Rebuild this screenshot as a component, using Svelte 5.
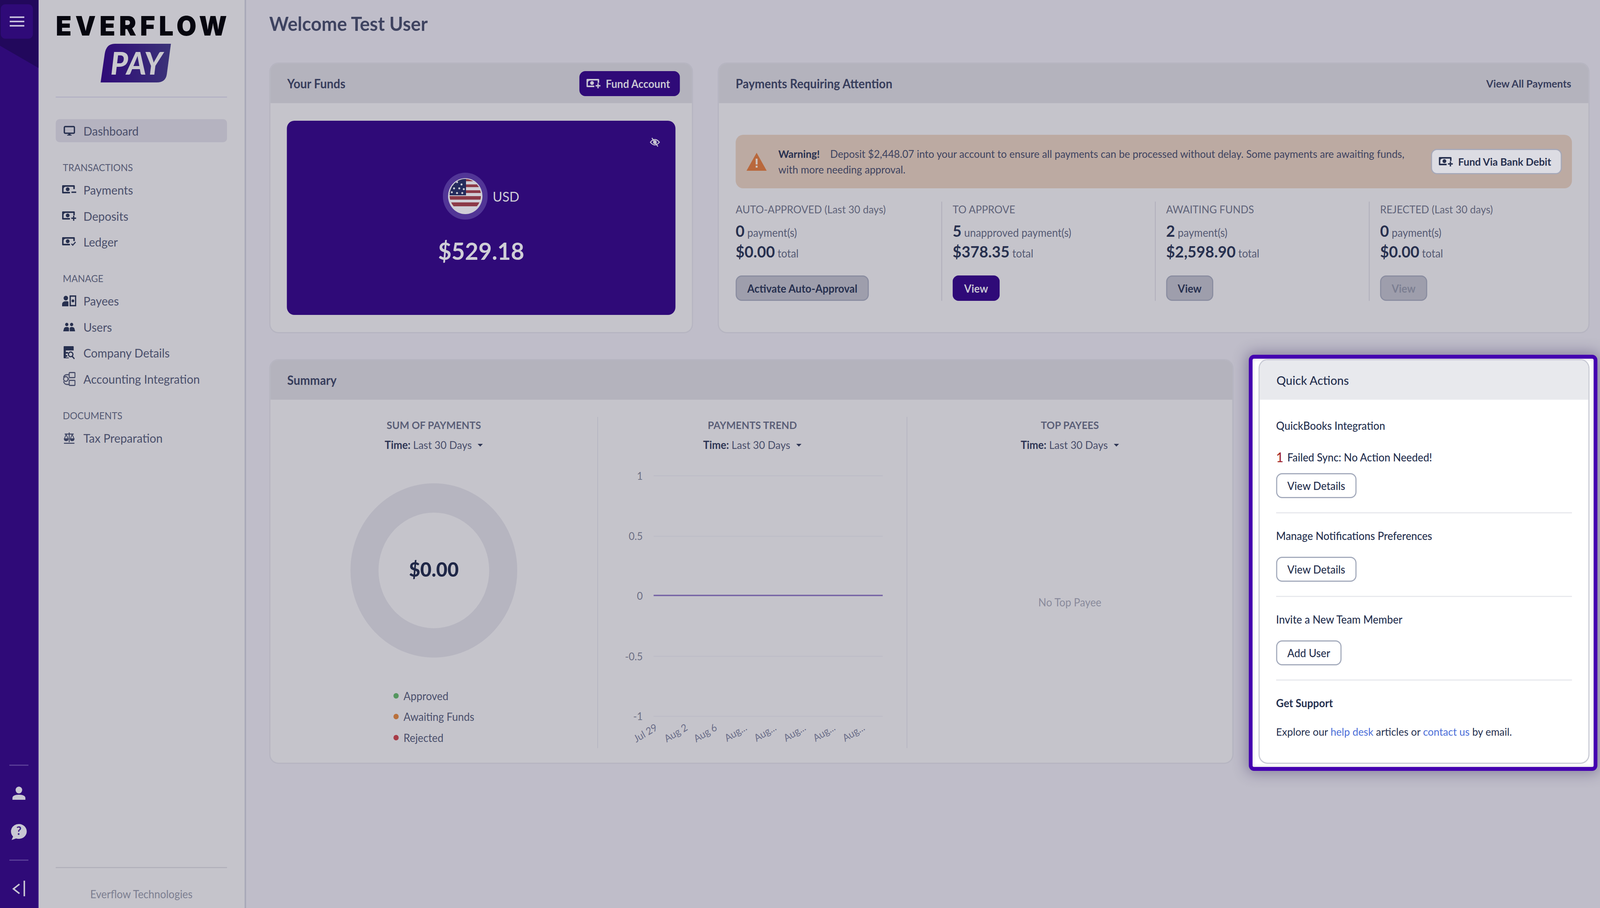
<script>
  // Design canvas is 4278 wide; fit it to the width the browser actually grants.
  const fit = Math.min(1, window.innerWidth / 4278);

  const sections = [
    { label: 'TRANSACTIONS', items: [['money-minus', 'Payments'], ['money-plus', 'Deposits'], ['money-check', 'Ledger']] },
    { label: 'MANAGE', items: [['payees', 'Payees'], ['users', 'Users'], ['company', 'Company Details'], ['accounting', 'Accounting Integration']] },
    { label: 'DOCUMENTS', items: [['tax', 'Tax Preparation']] }
  ];
  const stats = [
    { label: 'AUTO-APPROVED', note: ' (Last 30 days)', n: '0', unit: 'payment(s)', amt: '$0.00', btn: 'Activate Auto-Approval', kind: 'sec' },
    { label: 'TO APPROVE', note: '', n: '5', unit: 'unapproved payment(s)', amt: '$378.35', btn: 'View', kind: 'pri' },
    { label: 'AWAITING FUNDS', note: '', n: '2', unit: 'payment(s)', amt: '$2,598.90', btn: 'View', kind: 'sec' },
    { label: 'REJECTED', note: ' (Last 30 days)', n: '0', unit: 'payment(s)', amt: '$0.00', btn: 'View', kind: 'dis' }
  ];
  const legend = [['#55965f', 'Approved'], ['#b9703c', 'Awaiting Funds'], ['#a83c48', 'Rejected']];
  const yTicks = [['1', 1217], ['0.5', 1372], ['-0.5', 1680], ['-1', 1834]];
  const xTicks = [['Jul 29', 1760], ['Aug 2', 1841], ['Aug 6', 1920], ['Aug...', 2000], ['Aug...', 2079], ['Aug...', 2158], ['Aug...', 2237], ['Aug...', 2316]];
</script>

{#snippet money(kind)}
  <svg class="ic-money" viewBox="0 0 38 24" aria-hidden="true">
    <path fill="currentColor" d="M2 0H32a2 2 0 0 1 2 2V10H30V4H9.5a5.5 5.5 0 0 0-5.5 5.5V17H21V21H2a2 2 0 0 1-2-2V2a2 2 0 0 1 2-2Z"/>
    <circle cx="15" cy="10.5" r="5" fill="currentColor"/>
    {#if kind === 'minus'}
      <path d="M25 18H38" stroke="currentColor" stroke-width="3.4" fill="none"/>
    {:else if kind === 'plus'}
      <path d="M31 11V24M24.5 17.5H37.5" stroke="currentColor" stroke-width="3.4" fill="none"/>
    {:else}
      <path d="M25 17l3.5 3.5L36 12.5" stroke="currentColor" stroke-width="2.8" fill="none"/>
    {/if}
  </svg>
{/snippet}

{#snippet icon(name)}
  {#if name === 'monitor'}
    <svg class="ic-monitor" viewBox="0 0 31 25" aria-hidden="true"><rect x="2" y="2" width="27" height="17" rx="2.5" fill="none" stroke="currentColor" stroke-width="3.6"/><path fill="currentColor" d="M12.5 20h6v3h3v2h-12v-2h3Z"/></svg>
  {:else if name === 'money-minus'}
    {@render money('minus')}
  {:else if name === 'money-plus'}
    {@render money('plus')}
  {:else if name === 'money-check'}
    {@render money('check')}
  {:else if name === 'payees'}
    <svg class="ic-payees" viewBox="0 0 38 28" aria-hidden="true"><circle cx="10" cy="7" r="6" fill="currentColor"/><path fill="currentColor" d="M0 28v-5c0-5 4-8 10-8s7 1 7 1v12Z"/><path fill="currentColor" fill-rule="evenodd" d="M20 0h18v28H20ZM23.5 3.5v21h11v-21Z"/><circle cx="29" cy="14" r="3.6" fill="currentColor"/></svg>
  {:else if name === 'users'}
    <svg class="ic-users" viewBox="0 0 32 22" aria-hidden="true"><circle cx="9.5" cy="4.5" r="4.3" fill="currentColor"/><circle cx="22.5" cy="4.5" r="4.3" fill="currentColor"/><path fill="currentColor" d="M0 22l2-7c1-3 3-4 7.500-4s6 1.500 6 4v7Z"/><path fill="currentColor" d="M17.500 22v-7c0-2.500 1.500-4 5.500-4s6 1 7 4l2 7Z"/></svg>
  {:else if name === 'company'}
    <svg class="ic-company" viewBox="0 0 30 34" aria-hidden="true"><path fill="currentColor" d="M0 1.500A1.500 1.500 0 0 1 1.500 0H25.500A1.500 1.500 0 0 1 27 1.500V11H6V15H12V19H6V23H10V27H6V29H14V31H1.500A1.500 1.500 0 0 1 0 29.500Z"/><circle cx="19" cy="21" r="6" fill="none" stroke="currentColor" stroke-width="3"/><path d="M23 26l6 6.500" stroke="currentColor" stroke-width="3.200"/></svg>
  {:else if name === 'accounting'}
    <svg class="ic-accounting" viewBox="0 0 34 36" fill="none" stroke="currentColor" stroke-width="2.800" aria-hidden="true"><rect x="17" y="1.500" width="15.500" height="13" rx="2"/><rect x="17" y="21.500" width="15.500" height="13" rx="2"/><path d="M17 7H11Q4 7 2 14M2 24Q4 32 11 32H17"/><circle cx="8" cy="18" r="6"/><path d="M17 18H14"/></svg>
  {:else if name === 'tax'}
    <svg class="ic-tax" viewBox="0 0 30 30" aria-hidden="true" fill="none" stroke="currentColor" stroke-width="2.400"><path d="M15 1V26M3 5H27M1 28.500H29"/><path d="M7 6L2 17H12ZM23 6L18 17H28Z" stroke-width="2"/><path fill="currentColor" stroke="none" d="M1 17.500H13C13 21 11 23 7 23S1 21 1 17.500ZM17 17.500H29C29 21 27 23 23 23S17 21 17 17.500Z"/></svg>
  {/if}
{/snippet}

<div class="viewport">
<div class="page" style:transform="scaleX({fit})">
  <aside class="rail">
    <button class="burger" aria-label="Menu"><span></span><span></span><span></span></button>
    <div class="rail-foot">
      <i class="rail-rule"></i>
      <svg class="ic-person" viewBox="0 0 35 34" aria-hidden="true"><circle cx="17.500" cy="9" r="8.800" fill="currentColor"/><path fill="currentColor" d="M0 34v-4c0-6 7-9 17.500-9S35 24 35 30v4Z"/></svg>
      <svg class="ic-chat" viewBox="0 0 43 41" aria-hidden="true"><path fill="currentColor" d="M21.500 0A21 19 0 0 1 21.500 38Q17 38 14 37L2 41 6 32A21 19 0 0 1 21.500 0Z"/><text x="21.500" y="28" text-anchor="middle" class="chat-q">?</text></svg>
      <i class="rail-rule r2"></i>
      <svg class="ic-collapse" viewBox="0 0 35 40" fill="none" stroke="currentColor" stroke-width="4" aria-hidden="true"><path d="M19 9L3 21 19 33M32 0V40"/></svg>
    </div>
  </aside>

  <nav class="side">
    <div class="wordmark">EVERFLOW</div>
    <svg class="pay" viewBox="0 0 188 99" aria-label="Pay">
      <defs><linearGradient id="payg" x1="0" x2="1" y1="0" y2="0"><stop offset="0" stop-color="#2f0a78"/><stop offset="1" stop-color="#3b3378"/></linearGradient></defs>
      <path fill="url(#payg)" d="M0 99L11 26Q15 0 38 0L188 0 177 78Q174 99 150 99Z"/>
      <text x="96" y="79" text-anchor="middle" class="pay-t">PAY</text>
    </svg>
    <hr class="side-rule" />
    <a class="row active"><span class="ico">{@render icon('monitor')}</span>Dashboard</a>
    {#each sections as s}
      <div class="sec-label">{s.label}</div>
      {#each s.items as it}
        <a class="row"><span class="ico">{@render icon(it[0])}</span>{it[1]}</a>
      {/each}
    {/each}
    <div class="side-foot">Everflow Technologies</div>
  </nav>

  <main class="main">
    <h1>Welcome Test User</h1>
    <div class="top-grid">
      <section class="card">
        <header class="card-h">
          <span>Your Funds</span>
          <button class="btn pri fund">{@render money('plus')}Fund Account</button>
        </header>
        <div class="funds-body">
          <div class="panel">
            <svg class="eye" viewBox="0 0 28 24" fill="none" stroke="currentColor" stroke-width="2.600" aria-hidden="true"><path d="M2 12Q14 -2 26 12Q14 26 2 12Z"/><circle cx="14" cy="12" r="3.600" fill="currentColor"/><path d="M6 1L22 23"/></svg>
            <div class="cur">
              <svg class="flag" viewBox="0 0 120 120" aria-hidden="true">
                <circle cx="60" cy="60" r="60" fill="#513596"/>
                <circle cx="60" cy="60" r="46" fill="#cfced6"/>
                <clipPath id="fc"><circle cx="60" cy="58" r="42"/></clipPath>
                <g clip-path="url(#fc)">
                  <rect x="18" y="16" width="84" height="6" fill="#8c3a48"/>
                  <rect x="18" y="30" width="84" height="7" fill="#8c3a48"/>
                  <rect x="18" y="45" width="84" height="7" fill="#8c3a48"/>
                  <rect x="18" y="60" width="84" height="9" fill="#8c3a48"/>
                  <rect x="18" y="76" width="84" height="10" fill="#8c3a48"/>
                  <rect x="18" y="10" width="44" height="48" fill="#252b5c"/>
                  {#each [[26,30],[38,24],[50,30],[30,40],[44,40],[56,42],[24,50],[38,52],[52,52]] as p}
                    <circle cx={p[0]} cy={p[1]} r="2.600" fill="#cfced6"/>
                  {/each}
                </g>
              </svg>
              <span class="usd">USD</span>
            </div>
            <div class="balance">$529.18</div>
          </div>
        </div>
      </section>

      <section class="card">
        <header class="card-h">
          <span>Payments Requiring Attention</span>
          <a class="all">View All Payments</a>
        </header>
        <div class="pay-body">
          <div class="alert">
            <svg class="warn" viewBox="0 0 54 46" aria-hidden="true"><path fill="#b9683c" d="M27 0L54 46H0Z"/><path fill="#cfc5c0" d="M24.500 15h5v15h-5ZM24.500 33h5v5h-5Z"/></svg>
            <p><b>Warning!</b>&nbsp;&nbsp;&nbsp; Deposit $2,448.07 into your account to ensure all payments can be processed without delay. Some payments are awaiting funds, with more needing approval.</p>
            <button class="btn bank">{@render money('plus')}Fund Via Bank Debit</button>
          </div>
          <div class="stats">
            {#each stats as st}
              <div class="stat">
                <div class="st-label">{st.label}{st.note}</div>
                <div class="st-n"><b>{st.n}</b> {st.unit}</div>
                <div class="st-a"><b>{st.amt}</b> total</div>
                <button class="btn {st.kind}">{st.btn}</button>
              </div>
            {/each}
          </div>
        </div>
      </section>
    </div>

    <div class="bot-grid">
      <section class="card">
        <header class="card-h"><span>Summary</span></header>
        <div class="sum-body">
          <div class="sum-col">
            <div class="sum-title">SUM OF PAYMENTS</div>
            <div class="time"><b>Time:</b> Last 30 Days <i class="caret"></i></div>
            <div class="donut">
              <svg viewBox="0 0 446 446" aria-hidden="true"><circle cx="223" cy="223" r="185.500" fill="none" stroke="#b6b5c0" stroke-width="75"/></svg>
              <strong>$0.00</strong>
            </div>
            <ul class="legend">
              {#each legend as l}
                <li><i style="background:{l[0]}"></i>{l[1]}</li>
              {/each}
            </ul>
          </div>
          <div class="sum-col">
            <div class="sum-title">PAYMENTS TREND</div>
            <div class="time"><b>Time:</b> Last 30 Days <i class="caret"></i></div>
            <svg class="trend" viewBox="1599 1160 827 748" aria-label="Payments trend chart">
              {#each yTicks as t}
                <line x1="1748" x2="2362" y1={t[1]} y2={t[1]} stroke="#bcbbc6" stroke-width="2"/>
                <text x="1719" y={t[1] + 10} text-anchor="end" class="yt">{t[0]}</text>
              {/each}
              <text x="1719" y="1535" text-anchor="end" class="yt">0</text>
              <line x1="1748" x2="2362" y1="1524" y2="1524" stroke="#7462a4" stroke-width="3.500"/>
              {#each xTicks as t}
                <text transform="translate({t[1]} 1868) rotate(-30)" text-anchor="end" class="xt">{t[0]}</text>
              {/each}
            </svg>
          </div>
          <div class="sum-col">
            <div class="sum-title">TOP PAYEES</div>
            <div class="time"><b>Time:</b> Last 30 Days <i class="caret"></i></div>
            <div class="none">No Top Payee</div>
          </div>
        </div>
      </section>

      <div class="qa-wrap">
        <div class="spot"></div>
        <section class="card qa">
          <header class="card-h"><span>Quick Actions</span></header>
          <div class="qa-body">
            <div class="qa-t first">QuickBooks Integration</div>
            <div class="qa-fail"><em>1</em>Failed Sync: No Action Needed!</div>
            <button class="btn out b1">View Details</button>
            <hr />
            <div class="qa-t">Manage Notifications Preferences</div>
            <button class="btn out">View Details</button>
            <hr />
            <div class="qa-t">Invite a New Team Member</div>
            <button class="btn out">Add User</button>
            <hr />
            <div class="qa-t strong">Get Support</div>
            <p>Explore our <a>help desk</a> articles or <a>contact us</a> by email.</p>
          </div>
        </section>
      </div>
    </div>
  </main>
</div>
</div>

<style>
  :global(body) { margin: 0; background: #bfbdc9; overflow: hidden; }
  .viewport { width: 100vw; height: 100vh; overflow: hidden; }
  .page { display: flex; width: 4278px; height: 2324px; transform-origin: 0 0; font-family: Lato, "Noto Sans", sans-serif; color: #27304f; background: #bfbdc9; }

  .rail { position: relative; flex: 0 0 103px; box-sizing: border-box; display: flex; flex-direction: column; background: #2f0a78; color: #c9c7d3; border-right: 2px solid #43228a; }
  .rail::before { content: ""; position: absolute; left: 0; top: 0; width: 103px; height: 174px; background: #22085c; clip-path: polygon(0 0, 100% 0, 100% 100%, 0 117px); }
  .burger { position: relative; width: 86px; height: 88px; margin: 11px 0 0 2px; padding: 0; border: 0; border-radius: 12px; background: #2f0a78; display: flex; flex-direction: column; align-items: center; justify-content: center; gap: 7px; }
  .burger span { display: block; width: 39px; height: 4px; background: #c6bfdc; }
  .rail-foot { margin-top: auto; padding-bottom: 30px; display: flex; flex-direction: column; align-items: center; }
  .rail-rule { display: block; width: 51px; height: 3px; background: #5a3e98; }
  .rail-rule.r2 { margin-top: 50px; }
  .ic-person { width: 35px; height: 34px; margin-top: 53px; }
  .ic-chat { width: 43px; height: 41px; margin-top: 62px; overflow: visible; }
  .chat-q { font: 700 30px Lato, sans-serif; fill: #3d1c86; }
  .ic-collapse { width: 35px; height: 40px; margin-top: 51px; }

  .side { flex: 0 0 555px; min-width: 0; box-sizing: border-box; display: flex; flex-direction: column; padding: 0 47px 0 46px; background: #c5c4cb; border-right: 4px solid #a9a9b8; }
  .wordmark { margin-top: 41px; height: 50px; font: 900 69px/50px Inter, sans-serif; letter-spacing: 10px; color: #06060f; white-space: nowrap; width: 100%; }
  .pay { display: block; width: 188px; height: 99px; margin: 21px 0 0 120px; overflow: visible; }
  .pay-t { font: italic 900 80px Lato, sans-serif; fill: #c9c8ce; }
  .side-rule { width: 100%; height: 3px; border: 0; margin: 36px 0 55px; background: #b4b2c4; }
  .row { display: flex; align-items: center; height: 66.400px; padding-left: 17px; font-size: 31px; color: #4a4f6b; }
  .row.active { height: 59px; background: #b5b3c0; border-radius: 10px; margin-bottom: 4px; }
  .ico { flex: 0 0 38px; display: flex; justify-content: center; align-items: center; margin-right: 19px; color: #27304f; }
  .ico svg { display: block; }
  .sec-label { margin: 42px 0 7px 19px; height: 36px; line-height: 36px; font-size: 25px; color: #555a74; }
  .ic-money { width: 38px; height: 24px; display: block; }
  .ic-monitor { width: 31px; height: 25px; }
  .ic-payees { width: 38px; height: 28px; }
  .ic-users { width: 32px; height: 22px; }
  .ic-company { width: 30px; height: 34px; }
  .ic-accounting { width: 34px; height: 36px; color: #4a4f6b; }
  .ic-tax { width: 30px; height: 30px; color: #3a4160; }
  .side-foot { margin-top: auto; border-top: 3px solid #b2b1bc; padding-top: 30px; height: 72px; line-height: 72px; text-align: center; font-size: 28px; color: #7c7e90; }

  .main { flex: 1; min-width: 0; padding: 0 28px 0 62px; }
  h1 { margin: 0 0 40px; height: 120px; line-height: 120px; font-size: 49.600px; font-weight: 700; color: #3e4360; }
  .top-grid { display: grid; grid-template-columns: 1133px 1fr; gap: 66px; height: 693px; }
  .bot-grid { display: grid; grid-template-columns: 2578px 1fr; gap: 67px; height: 1036px; margin-top: 66px; }
  .card { box-sizing: border-box; display: flex; flex-direction: column; border: 3px solid #b6b5c1; border-radius: 24px; background: #c5c4cb; overflow: hidden; }
  .card-h { flex: 0 0 101px; box-sizing: border-box; display: flex; align-items: center; justify-content: space-between; padding: 0 46px 0 45px; background: #b4b3bd; font-size: 31.500px; font-weight: 700; color: #373d5c; }
  .all { font-size: 27.500px; color: #373d5c; }

  .btn { display: inline-flex; align-items: center; justify-content: center; box-sizing: border-box; height: 65px; padding: 0 28px; border: 3px solid transparent; border-radius: 16px; font: 700 28px Lato, sans-serif; white-space: nowrap; }
  .btn.pri { background: #2f0a78; color: #c9c7d3; }
  .btn.sec { background: #9e9eac; border-color: #8a8da0; color: #27304f; }
  .btn.dis { background: #9e9eac; border-color: #8a8da0; color: #7c7f92; }
  .btn.fund { height: 64px; width: 269px; padding: 0 8px 0 0; margin-right: -14px; }
  .fund .ic-money, .bank .ic-money { margin-right: 14px; }

  .funds-body { flex: 1; display: flex; padding: 45px 44px 44px; }
  .panel { position: relative; flex: 1; display: flex; flex-direction: column; align-items: center; padding-top: 133px; background: #2f0a78; border-radius: 20px; color: #cfced6; }
  .eye { position: absolute; top: 43px; right: 41px; width: 28px; height: 24px; color: #c9c7d3; }
  .cur { display: flex; align-items: center; gap: 13px; }
  .flag { width: 120px; height: 120px; display: block; }
  .usd { font-size: 35px; }
  .balance { margin-top: 39px; height: 80px; line-height: 80px; font-size: 62px; font-weight: 700; }

  .pay-body { flex: 1; padding: 81px 44px 0 45px; }
  .alert { box-sizing: border-box; display: flex; align-items: center; height: 137px; padding: 0 27px 0 29px; background: #bcaaa2; border-radius: 20px; }
  .warn { flex: 0 0 54px; width: 54px; height: 46px; margin-right: 31px; }
  .alert p { flex: 1; margin: 0; max-width: 1700px; font-size: 27.300px; line-height: 40px; color: #3e4360; }
  .alert b { color: #27304f; }
  .bank { margin-left: auto; flex: 0 0 350px; height: 65px; padding: 0 8px 0 0; background: #dcdce3; border-color: #a6a8b8; color: #27304f; font-size: 27.300px; }
  .stats { display: grid; grid-template-columns: 550px 571px 572px 1fr; height: 254px; margin-top: 34px; }
  .stat { box-sizing: border-box; display: flex; flex-direction: column; align-items: flex-start; padding-left: 28px; border-left: 2px solid #aeadb9; }
  .stat:first-child { padding-left: 0; border-left: 0; }
  .st-label { height: 40px; line-height: 40px; font-size: 27.400px; color: #5f6379; }
  .st-n { margin-top: 10px; height: 50px; line-height: 50px; font-size: 28px; color: #555a74; }
  .st-a { margin-top: 3px; height: 50px; line-height: 50px; font-size: 28px; color: #555a74; }
  .st-n b, .st-a b { font-size: 41px; font-weight: 700; color: #27304f; }
  .stat .btn { margin-top: auto; }

  .sum-body { flex: 1; display: grid; grid-template-columns: 874px 827px 1fr; padding: 44px 0; }
  .sum-col { display: flex; flex-direction: column; align-items: center; min-width: 0; }
  .sum-col + .sum-col { border-left: 2px solid #b7b6c2; }
  .sum-title { height: 42px; line-height: 42px; font-size: 27px; font-weight: 700; color: #5b5f78; }
  .time { margin-top: 9px; height: 42px; line-height: 42px; font-size: 27.800px; color: #4a4f6b; display: flex; align-items: center; gap: 7px; }
  .time b { color: #2e3554; }
  .caret { width: 0; height: 0; margin-left: 9px; border: 7px solid transparent; border-top-color: #2e3554; border-bottom: 0; }
  .donut { position: relative; width: 446px; height: 446px; margin-top: 77px; display: flex; align-items: center; justify-content: center; }
  .donut svg { position: absolute; inset: 0; width: 100%; height: 100%; }
  .donut strong { position: relative; top: -4px; font-size: 52px; font-weight: 900; color: #1f2747; }
  .legend { list-style: none; margin: 71px 0 0; padding: 0; }
  .legend li { display: flex; align-items: center; height: 53.500px; font-size: 28px; color: #4a4f6b; }
  .legend i { width: 14px; height: 14px; border-radius: 50%; margin-right: 13px; }
  .trend { display: block; width: 825px; height: 748px; }
  .yt { font: 27px Lato, sans-serif; fill: #6c6f84; }
  .xt { font: 26px Lato, sans-serif; fill: #6c6f8a; }
  .none { margin-top: 364px; font-size: 28px; color: #898a9b; }

  .qa-wrap { position: relative; display: flex; }
  .spot { position: absolute; inset: -11px -21px -18px -26px; box-sizing: border-box; border: 10px solid #4400b0; border-radius: 14px; background: #fff; box-shadow: 0 0 36px 6px rgba(60, 45, 100, .42), inset 0 0 10px rgba(90, 85, 120, .28); }
  .card.qa { position: relative; flex: 1; background: #fff; border-color: #c8cad4; }
  .qa .card-h { background: #e8e9ed; color: #25304f; font-weight: 500; }
  .qa-body { padding: 46px 44px 0; color: #25304f; font-size: 28px; }
  .qa-t { height: 40px; line-height: 40px; font-weight: 500; margin-bottom: 34px; }
  .qa-t.first { margin-bottom: 0; }
  .qa-t.strong { font-weight: 700; }
  .qa-fail { margin-top: 41px; height: 40px; line-height: 40px; font-weight: 500; display: flex; align-items: center; }
  .qa-fail em { font-style: normal; color: #a3262b; font-size: 34px; width: 30px; }
  .btn.out { display: flex; width: fit-content; height: 64px; padding: 0 27px; background: #fff; border: 3px solid #a4abbc; color: #25304f; font-weight: 500; }
  .btn.out.b1 { margin-top: 21px; }
  .qa-body hr { height: 3px; margin: 36px 0 37px; border: 0; background: #e8e9ed; }
  .qa-body p { margin: 0; height: 40px; line-height: 40px; font-size: 27.500px; }
  .qa-body p a { color: #4a6dd8; }
</style>
